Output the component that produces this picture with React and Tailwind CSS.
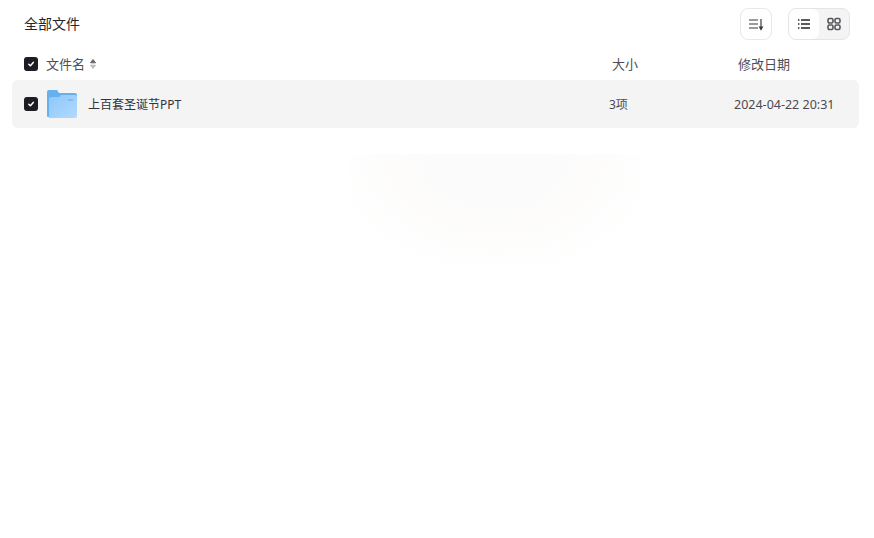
const font = "font-['Noto_Sans','Noto_Sans_CJK_SC',sans-serif]";

const Checkbox = () => (
  <span className="flex h-[14px] w-[14px] shrink-0 items-center justify-center rounded-[3px] bg-[#1c1c22]">
    <svg width="10" height="10" viewBox="0 0 10 10" fill="none">
      <path d="M2.8 5.2 L4.4 6.8 L7.3 3.4" stroke="#fff" strokeWidth="1.5" strokeLinecap="round" strokeLinejoin="round" />
    </svg>
  </span>
);

const SortArrows = () => (
  <svg width="8" height="12" viewBox="0 0 8 12" className="ml-[4px]">
    <path d="M4 1.5 L6.5 4.8 H1.5 Z" fill="#66666b" stroke="#66666b" strokeWidth="1" strokeLinejoin="round" />
    <path d="M4 10.5 L6.5 7.2 H1.5 Z" fill="#bcbcc0" stroke="#bcbcc0" strokeWidth="1" strokeLinejoin="round" />
  </svg>
);

const FolderIcon = () => (
  <svg width="30" height="28" viewBox="0 0 30 28">
    <defs>
      <linearGradient id="folderFront" x1="0" y1="0" x2="1" y2="1">
        <stop offset="0" stopColor="#8cc6fb" />
        <stop offset="1" stopColor="#b2dbfd" />
      </linearGradient>
    </defs>
    <path d="M0 2 a2 2 0 0 1 2 -2 H10 L12 3 H28 a2 2 0 0 1 2 2 V8 H0 Z" fill="#66b0ee" />
    <path d="M0 6 H2 V27 H1 a1 1 0 0 1 -1 -1 Z" fill="#66b0ee" />
    <path d="M2 9 a2 2 0 0 1 2 -2 H12 L14 5 H28 a2 2 0 0 1 2 2 V26 a2 2 0 0 1 -2 2 H2 Z" fill="url(#folderFront)" />
    <rect x="21" y="9" width="5" height="2" rx="0.5" fill="#7fbef4" />
  </svg>
);

export default function App() {
  return (
    <div className={`relative h-[538px] w-[874px] overflow-hidden bg-white ${font}`}>
      {/* faint watermark behind the list */}
      <div className="absolute left-[350px] top-[154px] h-[110px] w-[290px] bg-[radial-gradient(ellipse_170px_125px_at_50%_0%,#fbfbfb_0%,#fdfcfb_55%,#ffffff_100%)]" />

      <div className="relative">
        <div className="flex h-[48px] items-center pl-[24px] pr-[24px]">
          <span className="pb-[2px] text-[14px] text-[#25262b]">全部文件</span>
          <div className="ml-auto flex items-center gap-[16px]">
            <button className="flex h-[32px] w-[32px] items-center justify-center rounded-[8px] border border-[#e8e8ea] bg-white">
              <svg width="16" height="14" viewBox="0 0 16 14" fill="none" stroke="#3a3a40" strokeWidth="1.2">
                <path d="M1 3 H10 M1 7 H10 M1 11 H10" />
                <path d="M13 2 V11.5" />
                <path d="M11.6 10 L13 12.5 L14.4 10 Z" fill="#3a3a40" />
              </svg>
            </button>
            <div className="flex h-[32px] w-[62px] rounded-[8px] border border-[#e4e4e6] bg-[#f4f4f4]">
              <span className="flex w-[30px] items-center justify-center rounded-[7px] bg-white">
                <svg width="14" height="12" viewBox="0 0 14 12" fill="none" stroke="#26262b" strokeWidth="1.3">
                  <path d="M1 2 H2.4 M1 6 H2.4 M1 10 H2.4 M4 2 H13 M4 6 H13 M4 10 H13" />
                </svg>
              </span>
              <span className="flex flex-1 items-center justify-center">
                <svg width="14" height="14" viewBox="0 0 14 14" fill="none" stroke="#55555a" strokeWidth="1.6">
                  <rect x="1" y="1.5" width="5" height="4.5" rx="1.4" />
                  <rect x="8" y="1.5" width="5" height="4.5" rx="1.4" />
                  <rect x="1" y="8" width="5" height="4.5" rx="1.4" />
                  <rect x="8" y="8" width="5" height="4.5" rx="1.4" />
                </svg>
              </span>
            </div>
          </div>
        </div>

        <div className="flex h-[32px] items-center pl-[24px] text-[13px] text-[#4e4e58]">
          <Checkbox />
          <span className="ml-[8px] pt-[2px]">文件名</span>
          <SortArrows />
          <span className="ml-[515px] w-[126px] pt-[2px]">大小</span>
          <span className="pt-[2px]">修改日期</span>
        </div>

        <div className="mx-[12px] flex h-[48px] w-[847px] items-center rounded-[6px] bg-[#f4f4f4] pl-[12px] text-[12px] text-[#4a4a52]">
          <Checkbox />
          <span className="ml-[9px]">
            <FolderIcon />
          </span>
          <span className="ml-[11px] w-[521px] pt-[2px] text-[#33333a]">上百套圣诞节PPT</span>
          <span className="w-[125px] pt-[2px]">3项</span>
          <span className="pt-[2px] text-[12.5px]">2024-04-22 20:31</span>
        </div>
      </div>
    </div>
  );
}
